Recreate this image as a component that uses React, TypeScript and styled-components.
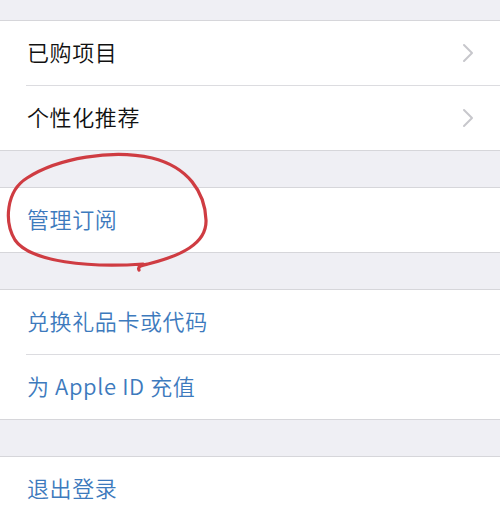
import styled, { createGlobalStyle } from 'styled-components';

const GlobalStyle = createGlobalStyle`
  html, body {
    margin: 0;
    padding: 0;
    background: #efeff4;
    font-family: "Noto Sans CJK SC", "Noto Sans", sans-serif;
  }
`;

const Page = styled.div`
  position: relative;
  width: 500px;
  height: 519px;
  overflow: hidden;
  background: #efeff4;
  padding-top: 20px;
  box-sizing: border-box;
  display: flex;
  flex-direction: column;
  gap: 36px;
`;

const Group = styled.div`
  background: #fff;
  border-top: 1px solid #d6d6da;
  border-bottom: 1px solid #d6d6da;
  display: flex;
  flex-direction: column;
`;

const Row = styled.div`
  height: 59px;
  flex-shrink: 0;
  display: flex;
  align-items: center;
  padding: 0 26px 5px 27px;
  & + & {
    border-top: 1px solid #dcdce0;
    margin-left: 26px;
    padding-left: 1px;
  }
`;

const Label = styled.span<{ $link?: boolean }>`
  flex: 1;
  font-size: 22px;
  line-height: 1;
  font-weight: 350;
  letter-spacing: 0.6px;
  color: ${(p) => (p.$link ? '#3d7abd' : '#111')};
`;

const ChevronBox = styled.span`
  display: flex;
  margin-top: 5px;
`;

const Chevron = () => (
  <ChevronBox>
    <svg width="12" height="20" viewBox="0 0 12 20">
      <path d="M2 2 L10 10 L2 18" fill="none" stroke="#c7c7cc" strokeWidth="2" strokeLinecap="round" strokeLinejoin="round" />
    </svg>
  </ChevronBox>
);

const Scribble = styled.svg`
  position: absolute;
  left: 0;
  top: 0;
  pointer-events: none;
`;

const items = [
  [
    { text: '已购项目', chevron: true },
    { text: '个性化推荐', chevron: true },
  ],
  [{ text: '管理订阅', link: true }],
  [
    { text: '兑换礼品卡或代码', link: true },
    { text: '为 Apple ID 充值', link: true },
  ],
  [{ text: '退出登录', link: true }],
];

const App = () => {
  return (
    <Page>
      <GlobalStyle />
      {items.map((group, gi) => (
        <Group key={gi}>
          {group.map((it: any) => (
            <Row key={it.text}>
              <Label $link={it.link}>{it.text}</Label>
              {it.chevron && <Chevron />}
            </Row>
          ))}
        </Group>
      ))}
      <Scribble width="500" height="519" viewBox="0 0 500 519">
        <path
          d="M139 270 C137 266 143 265 148 264 C180 256 207 244 206 220 C205 192 188 167 152 158 C112 149 58 158 27 178 C6 191 4 222 15 240 C30 262 90 268 143 264"
          fill="none"
          stroke="#cf3c42"
          strokeWidth="3.2"
          strokeLinecap="round"
        />
      </Scribble>
    </Page>
  );
};

export default App;
